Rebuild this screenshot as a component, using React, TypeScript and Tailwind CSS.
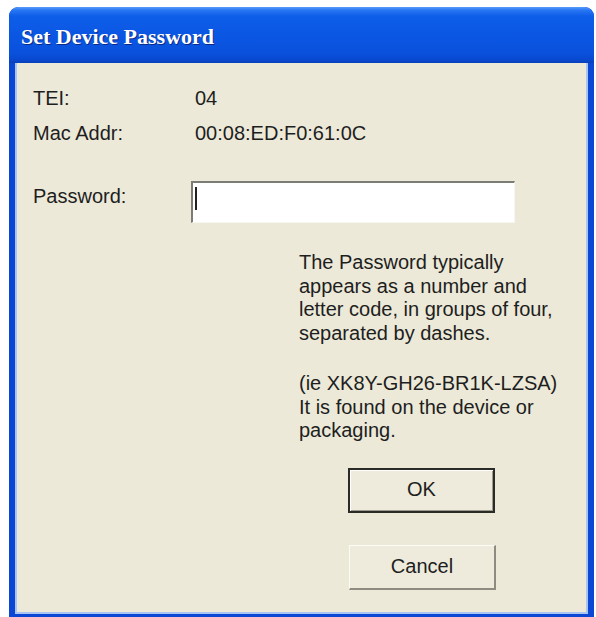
import React from "react";

const sans = "font-['Liberation_Sans',Arial,sans-serif]";

function Row({ label, children }: { label: string; children: React.ReactNode }) {
  return (
    <div className="flex items-start">
      <div className="w-[158px] shrink-0">{label}</div>
      <div className="flex-1">{children}</div>
    </div>
  );
}

export default function App() {
  return (
    <div className="w-[596px] h-[617px] bg-white overflow-hidden">
      <div className="ml-[9px] mt-[7px] w-[585px] h-[612px] rounded-t-[9px] bg-[#0b46d4] flex flex-col overflow-hidden">
        {/* caption */}
        <div className="h-[56px] shrink-0 rounded-t-[9px] bg-[linear-gradient(to_bottom,#5b9cfa_0px,#2a78f4_3px,#0e5ee9_9px,#0a56e3_30px,#0a51dc_46px,#0848cf_53px,#0a3fb8_56px)] pl-[12px] pt-[17px]">
          <span className="font-['Liberation_Serif',serif] font-bold text-[22px] leading-[26px] text-white [text-shadow:1px_1px_0_#0c2a85]">
            Set Device Password
          </span>
        </div>

        {/* client area */}
        <div className="flex-1 mx-[6px] mb-[5px] border-x-2 border-b-2 border-[#a9c5f3] bg-[#ece9d8]">
          <div className={`${sans} text-[20px] leading-[23.5px] text-[#1e1e1e] pl-[16px] pt-[24px]`}>
            <Row label="TEI:">
              <div className="pl-[4px]">04</div>
            </Row>
            <div className="h-[11px]" />
            <Row label="Mac Addr:">
              <div className="pl-[4px]">00:08:ED:F0:61:0C</div>
            </Row>
            <div className="h-[40px]" />
            <Row label="Password:">
              <div className="relative w-[324px] h-[42px] bg-white border-t-2 border-l-2 border-t-[#7c7c76] border-l-[#7c7c76] border-b border-r border-b-[#f6f6f2] border-r-[#f6f6f2] -mt-[4px]">
                <div className="absolute left-[2px] top-[4px] w-[2px] h-[23px] bg-[#222]" />
              </div>
            </Row>

            <div className="ml-[266px] mt-[28px] w-[280px]">
              <p>
                The Password typically
                <br />
                appears as a number and
                <br />
                letter code, in groups of four,
                <br />
                separated by dashes.
              </p>
              <p className="mt-[27px]">
                (ie XK8Y-GH26-BR1K-LZSA)
                <br />
                It is found on the device or
                <br />
                packaging.
              </p>
            </div>

            <div className="ml-[315px] mt-[25px] flex flex-col gap-[32px]">
              <button className="w-[147px] h-[45px] border-2 border-[#2a2a26] bg-[#eeebdc] text-[20px] text-[#1e1e1e] flex items-center justify-center shadow-[inset_1px_1px_0_#ffffff,inset_-1px_-1px_0_#9c9a8e]">
                OK
              </button>
              <button className="w-[147px] h-[45px] border border-t-[#fbfbf7] border-l-[#fbfbf7] border-b-2 border-r-2 border-b-[#8e8c80] border-r-[#8e8c80] bg-[#eeebdc] text-[20px] text-[#1e1e1e] flex items-center justify-center ml-[1px]">
                Cancel
              </button>
            </div>
          </div>
        </div>
      </div>
    </div>
  );
}
